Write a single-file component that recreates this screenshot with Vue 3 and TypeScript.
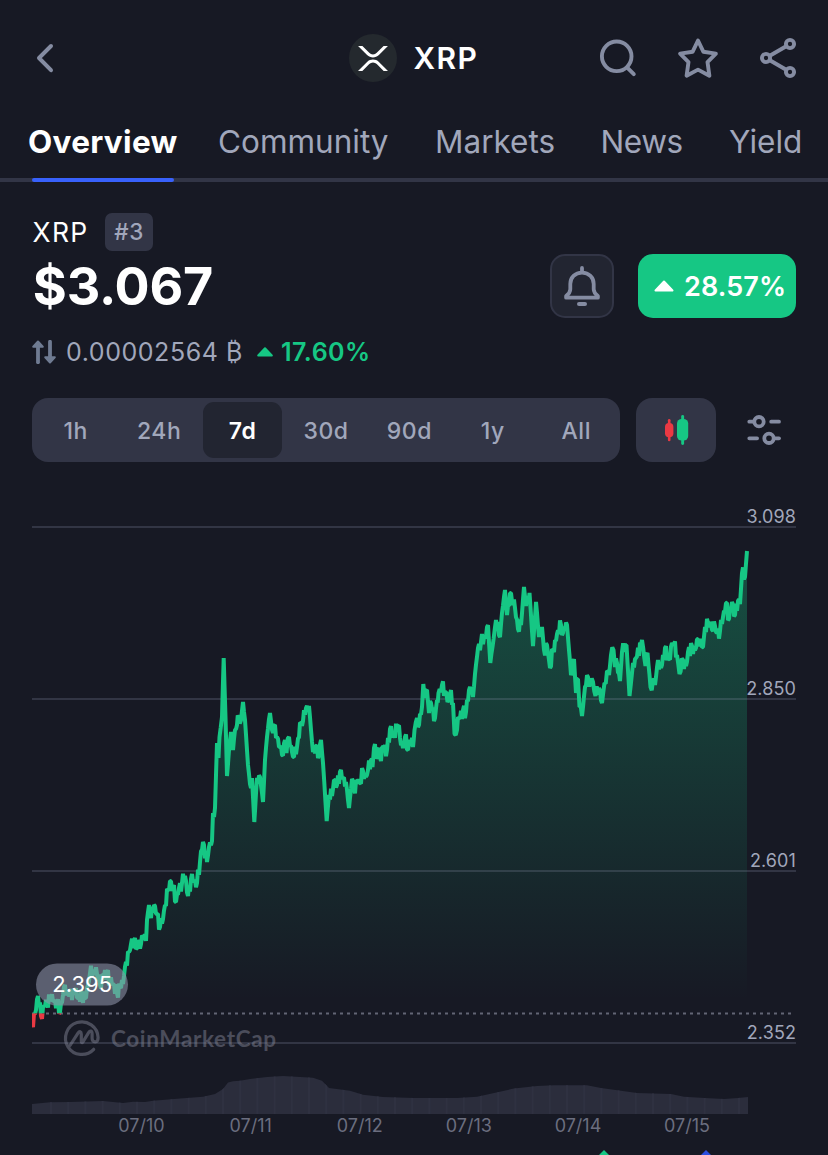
<script setup lang="ts">
type Point = [number, number]

const tabs = ['Overview', 'Community', 'Markets', 'News', 'Yield']
const ranges = ['1h', '24h', '7d', '30d', '90d', '1y', 'All']
const activeRange = '7d'

const gridRows = [
  { y: 527, label: '3.098' },
  { y: 699, label: '2.850' },
  { y: 871, label: '2.601' },
  { y: 1043, label: '2.352' },
]

const dates = [
  { x: 141.5, label: '07/10' },
  { x: 250.7, label: '07/11' },
  { x: 359.8, label: '07/12' },
  { x: 468.9, label: '07/13' },
  { x: 578, label: '07/14' },
  { x: 687.1, label: '07/15' },
]

const baseline = 1013.5

const prices: Point[] = [
  [32, 1023], [35, 1014], [38, 996], [41, 1016], [44, 1006], [47, 1003], [51, 998], [54, 1001], [57, 1003], [60, 1012],
  [63, 995], [65, 985], [67, 992], [70, 994], [75, 992], [78, 998], [82, 996], [85, 998], [88, 985], [90, 973],
  [93, 972], [97, 974], [100, 985], [103, 975], [107, 972], [110, 982], [113, 984], [117, 993], [120, 987], [124, 976],
  [126, 962], [129, 952], [131, 944], [134, 940], [136, 949], [139, 942], [141, 944], [143, 937], [146, 941], [147, 920],
  [149, 905], [151, 918], [154, 905], [157, 914], [160, 927], [163, 919], [165, 905], [168, 890], [170, 881], [173, 887],
  [176, 902], [179, 888], [182, 883], [185, 876], [188, 896], [191, 879], [194, 881], [197, 883], [200, 862], [203, 842],
  [207, 862], [209, 847], [212, 841], [213, 813], [215, 808], [217, 743], [218.5, 758], [219.5, 737], [222, 717], [223.7, 658],
  [225.5, 717], [227, 776], [229, 750], [231, 732], [233, 750], [235, 730], [237, 725], [238.5, 717], [241, 720], [243, 702],
  [245, 720], [248, 765], [250, 784], [252, 778], [254.3, 822], [257, 778], [260, 777], [263, 802], [265, 760], [267, 737],
  [269, 719], [271, 721], [273, 733], [275, 725], [277, 737], [280, 747], [282, 755], [285, 740], [286.5, 753], [289, 737],
  [292, 752], [294, 757], [297, 747], [301, 723], [303, 721], [306, 708], [309, 706], [311, 730], [313, 752], [316, 746],
  [318, 758], [321, 740], [323, 763], [326.7, 821], [329, 795], [332, 796], [334, 780], [337, 785], [341, 770], [343, 778],
  [346, 782], [349, 808], [352, 779], [354, 789], [357, 781], [360, 783], [363, 771], [366, 777], [368, 770], [371, 760],
  [372.5, 767], [374, 748], [377, 757], [379, 748], [381, 761], [383, 747], [387, 750], [390, 729], [393, 737], [398, 726],
  [400, 738], [403, 748], [405, 737], [408, 750], [410, 740], [413, 747], [414.5, 730], [417, 718], [419, 725], [422, 707],
  [423.3, 684], [425, 698], [427, 690], [429, 713], [431, 703], [435, 718], [437, 700], [438.5, 693], [442, 685], [445, 692],
  [447.5, 702], [450, 694], [453, 703], [454.5, 734], [457, 730], [459, 718], [463, 710], [466, 712], [470, 687], [473, 697],
  [475, 674], [478, 648], [481, 642], [485, 638], [488, 625], [490.3, 663], [492.5, 647], [496, 620], [500, 637], [502, 613],
  [505, 590], [507, 615], [511, 593], [513, 605], [515, 608], [518, 629], [521, 625], [524, 587], [526, 606], [529.5, 593],
  [533, 646], [536, 602], [539, 637], [542, 627], [544, 650], [547, 645], [550, 668], [553, 650], [557, 634], [561, 625],
  [563, 633], [567, 625], [569, 650], [571, 675], [574, 659], [576, 693], [578, 679], [579.5, 707], [582, 716], [585, 687],
  [588, 677], [590.5, 683], [593, 682], [595.5, 696], [599, 688], [602, 703], [604.5, 683], [607, 671], [609, 675], [611, 655],
  [613.5, 650], [615, 667], [617, 663], [620, 681], [622, 652], [626.5, 645], [629.5, 696], [632, 673], [636, 658], [642, 640],
  [645.5, 666], [647.5, 653], [650.5, 687], [653, 680], [655, 685], [658, 660], [661, 668], [665, 648], [669, 659], [672, 643],
  [674, 644], [677, 655], [679.5, 674], [683, 660], [686, 666], [688, 652], [692, 646], [695, 650], [698, 639], [700, 643],
  [703, 647], [705, 627], [708, 623], [711, 624], [713, 631], [715, 626], [717, 633], [720, 631], [723, 617], [726, 603],
  [729, 619], [732, 602], [735, 615], [738, 601], [740, 604], [742, 573], [745, 577], [747, 551],
]

const volume: Point[] = [
  [32, 1104], [50, 1102.3], [70, 1102], [103, 1101], [123, 1103], [133, 1101.7], [145, 1102], [153, 1100.7], [177, 1098.7],
  [203, 1096.7], [215, 1094], [223, 1089], [228, 1082.5], [233, 1081.3], [240, 1080.8], [250, 1079], [267, 1077], [283, 1076],
  [313, 1077.7], [322, 1080.7], [329, 1088], [350, 1090.7], [363, 1094.7], [383, 1097], [414, 1098], [457, 1098],
  [477, 1096.7], [494, 1093], [514, 1088.5], [537, 1086], [554, 1085.3], [587, 1085.3], [601, 1088], [621, 1090.7],
  [637, 1093], [671, 1094], [684, 1096.7], [705, 1098], [724, 1099], [738, 1098], [748, 1097],
]

const toPoints = (list: Point[]): string => list.map(([x, y]) => `${x.toFixed(2)},${y.toFixed(2)}`).join(' ')

// Fills the gaps between key prices with small tick-to-tick swings.
function withTicks(list: Point[]): Point[] {
  const out: Point[] = []
  let side = 1
  for (let i = 0; i < list.length - 1; i++) {
    const [x0, y0] = list[i]
    const [x1, y1] = list[i + 1]
    out.push(list[i])
    const steps = Math.max(2, Math.round((x1 - x0) / 1.07))
    const steepness = Math.abs(y1 - y0) / (x1 - x0)
    const swing = steepness > 7 ? 1 : 7
    for (let k = 1; k < steps; k++) {
      const t = k / steps
      const wobble = 0.6 + 0.4 * Math.sin(i * 2.3 + k * 1.7)
      out.push([x0 + (x1 - x0) * t, y0 + (y1 - y0) * t + side * swing * wobble])
      side = -side
    }
  }
  out.push(list[list.length - 1])
  return out
}

const linePoints = toPoints(withTicks(prices))
const areaPoints = `32,${baseline} ${linePoints} 747,${baseline}`
const volumePoints = `32,1114 ${toPoints(volume)} 748,1114`
const stripes = Array.from({ length: 41 }, (_, i) => 51 + i * 17.2)
</script>

<template>
  <div class="screen">
    <header class="topbar">
      <svg class="back" viewBox="0 0 24 32" fill="none">
        <path d="M19 4 7 16l12 12.2" stroke="#858ca2" stroke-width="4" stroke-linecap="round" stroke-linejoin="round" />
      </svg>
      <div class="coin">
        <span class="coin-badge">
          <svg viewBox="0 0 512 424" fill="#fff">
            <path d="M437 0h74L357 152.48c-55.77 55.19-146.19 55.19-202 0L.94 0H75l117 115.83a91.11 91.11 0 0 0 127.91 0Z" />
            <path d="M74.05 424H0l155-153.42c55.77-55.19 146.19-55.19 202 0L512 424h-74L320 307.23a91.11 91.11 0 0 0-127.91 0Z" />
          </svg>
        </span>
        <span class="coin-name">XRP</span>
      </div>
      <div class="actions">
        <svg viewBox="0 0 44 44" fill="none">
          <circle cx="20.7" cy="20.3" r="14.8" />
          <path d="m31.5 31.8 6.3 6.4" />
        </svg>
        <svg viewBox="0 0 44 44" fill="none">
          <path d="m22 4.5 5.3 11.2 12.6 1.9-8.4 8.5 1.9 13.6L22 33.6l-11.4 6.1 1.9-13.6-8.4-8.5 12.6-1.9z" />
        </svg>
        <svg viewBox="0 0 44 44" fill="none">
          <circle cx="34" cy="8" r="4.1" />
          <circle cx="10" cy="22" r="4.1" />
          <circle cx="34" cy="36" r="4.1" />
          <path d="m13.8 19.8 16.4-9.6M13.8 24.2l16.4 9.6" />
        </svg>
      </div>
    </header>

    <nav class="tabs">
      <span v-for="(tab, i) in tabs" :key="tab" class="tab" :class="{ active: i === 0 }">{{ tab }}</span>
    </nav>

    <section class="summary">
      <div class="quote">
        <div class="name-row">
          <span class="symbol">XRP</span>
          <span class="rank">#3</span>
        </div>
        <div class="price">$3.067</div>
      </div>
      <button class="bell" type="button">
        <svg viewBox="0 0 44 44" fill="none" stroke="#858ca2" stroke-linecap="round" stroke-linejoin="round">
          <path d="M22 4v4" stroke-width="3.8" />
          <path d="M22 8.6c-7 0-11.7 5-11.7 11.4v5.2c0 3.2-1.4 4.6-4.2 6.8v1.7h31.8V32c-2.8-2.2-4.2-3.6-4.2-6.8V20C33.7 13.6 29 8.6 22 8.6z" stroke-width="3.8" />
          <path d="M19 40h6" stroke-width="4" />
        </svg>
      </button>
      <div class="change">
        <svg viewBox="0 0 20 12"><path d="M10 1.5 18.5 10.5h-17z" fill="#fff" stroke="#fff" stroke-width="2" stroke-linejoin="round" /></svg>
        <span>28.57%</span>
      </div>
    </section>

    <div class="btc-row">
      <svg class="swap" viewBox="0 0 24 24" fill="#6f7b92" stroke="#6f7b92" stroke-linecap="round" stroke-linejoin="round">
        <path d="M6 22.3V5" stroke-width="3.8" />
        <path d="M6 1.5 10.8 6.7H1.2z" stroke-width="2" />
        <path d="M18 1.7V19" stroke-width="3.8" />
        <path d="m18 22.5 4.8-5.2h-9.6z" stroke-width="2" />
      </svg>
      <span class="btc-value">0.00002564 ₿</span>
      <svg class="up" viewBox="0 0 16 10"><path d="M8 1.3 14.8 8.5H1.2z" fill="#16c784" stroke="#16c784" stroke-width="2" stroke-linejoin="round" /></svg>
      <span class="btc-change">17.60%</span>
    </div>

    <div class="controls">
      <div class="ranges">
        <span v-for="r in ranges" :key="r" class="range" :class="{ active: r === activeRange }">{{ r }}</span>
      </div>
      <button class="candles" type="button">
        <svg viewBox="0 0 28 32">
          <g fill="#ea3943">
            <rect x="3.9" y="5" width="2.6" height="22.3" rx="1.3" />
            <rect x="1" y="9" width="8.4" height="14.2" rx="4" />
          </g>
          <g fill="#16c784">
            <rect x="17.2" y="1" width="2.9" height="30" rx="1.4" />
            <rect x="13" y="5" width="11.2" height="21.6" rx="4.6" />
          </g>
        </svg>
      </button>
      <svg class="sliders" viewBox="0 0 36 32" fill="none" stroke="#858ca2" stroke-width="3.8" stroke-linecap="round">
        <path d="M3.3 7.7h3.600" />
        <circle cx="13" cy="7.7" r="4.7" />
        <path d="M25.2 7.700h7.800M3.300 24.300h7.800" />
        <circle cx="23" cy="24.3" r="4.7" />
        <path d="M29.700 24.300H33" />
      </svg>
    </div>

    <svg class="chart" viewBox="0 480 828 675">
      <defs>
        <linearGradient id="fade" gradientUnits="userSpaceOnUse" x1="0" y1="551" x2="0" y2="1000">
          <stop offset="0" stop-color="#16c784" stop-opacity="0.32" />
          <stop offset="1" stop-color="#16c784" stop-opacity="0" />
        </linearGradient>
        <clipPath id="above"><rect x="32" y="480" width="730" height="533.5" /></clipPath>
        <clipPath id="below"><rect x="32" y="1013.5" width="730" height="20" /></clipPath>
        <clipPath id="volume"><polygon :points="volumePoints" /></clipPath>
      </defs>

      <g class="watermark">
        <path d="M93.7 1049.3A16.3 16.3 0 1 1 98.1 1037.5c0 3-1 4.3-3 4.3s-3-1.2-3-3.5v-4.5c0-3.2-2-3.6-3.5-1.2l-5.6 9.2c-.9 1.3-1.7 1-1.7-.6v-7c0-2.8-1.8-3.4-3.3-1l-8 12.3" fill="none" stroke="#4b4d5b" stroke-width="3.2" stroke-linecap="round" stroke-linejoin="round" />
        <text x="111" y="1046.5" textLength="165">CoinMarketCap</text>
      </g>

      <polygon :points="areaPoints" fill="url(#fade)" clip-path="url(#above)" />
      <g class="grid">
        <line v-for="row in gridRows" :key="row.label" x1="32" x2="796" :y1="row.y" :y2="row.y" />
      </g>
      <line class="dotted" x1="32" x2="791.5" :y1="baseline" :y2="baseline" />

      <polygon :points="volumePoints" fill="#2b2d3c" />
      <g clip-path="url(#volume)">
        <line v-for="x in stripes" :key="x" :x1="x" :x2="x" y1="1070" y2="1114" class="stripe" />
      </g>

      <polyline class="line" :points="linePoints" clip-path="url(#above)" />
      <polyline class="line down" :points="linePoints" clip-path="url(#below)" />

      <text v-for="row in gridRows" :key="row.label" class="value" x="796" :y="row.y - 4" text-anchor="end">{{ row.label }}</text>
      <text v-for="d in dates" :key="d.label" class="date" :x="d.x" y="1132" text-anchor="middle">{{ d.label }}</text>

      <rect x="36" y="963.5" width="92" height="42" rx="21" fill="#8e92a7" fill-opacity="0.58" />
      <text class="open" x="82.2" y="992" text-anchor="middle">2.395</text>

      <path d="m604 1150 7 7h-14z" fill="#16c784" />
      <path d="m706 1150 7 7h-14z" fill="#2b4fe0" />
    </svg>
  </div>
</template>

<style>
body {
  background: #171924;
}
</style>

<style scoped>
.screen {
  width: 828px;
  height: 1155px;
  overflow: hidden;
  background: #171924;
  color: #fff;
  font-family: Inter, "Liberation Sans", sans-serif;
}

.screen svg {
  display: block;
  flex: none;
}

button {
  padding: 0;
  border: 0;
  font: inherit;
}

.topbar {
  display: grid;
  grid-template-columns: 1fr auto 1fr;
  align-items: center;
  height: 116px;
  padding: 0 28px 0 32px;
}

.back {
  width: 24px;
  height: 32px;
}

.coin {
  display: flex;
  align-items: center;
  gap: 16px;
}

.coin-badge {
  display: flex;
  align-items: center;
  justify-content: center;
  width: 48px;
  height: 48px;
  border-radius: 50%;
  background: #24292e;
}

.coin-badge svg {
  width: 30px;
  height: 25px;
}

.coin-name {
  width: 70px;
  font-size: 30px;
  font-weight: 600;
  letter-spacing: 1.4px;
  text-indent: 0.5px;
}

.actions {
  display: flex;
  justify-content: flex-end;
  gap: 36px;
}

.actions svg {
  width: 44px;
  height: 44px;
  stroke: #858ca2;
  stroke-width: 3.9;
  stroke-linecap: round;
  stroke-linejoin: round;
}

.tabs {
  display: grid;
  grid-template-columns: 190px 217px 165.5px 128.5px auto;
  box-sizing: border-box;
  height: 66px;
  padding-left: 28px;
  border-bottom: 4px solid #323546;
  color: #a1a7bb;
  font-size: 31.5px;
  line-height: 52px;
  white-space: nowrap;
}

.tab:nth-child(4) {
  letter-spacing: -0.4px;
}

.tab.active {
  position: relative;
  color: #fff;
  font-weight: 700;
  letter-spacing: 0.3px;
}

.tab.active::after {
  content: "";
  position: absolute;
  left: 4px;
  bottom: -4px;
  width: 142px;
  height: 4px;
  border-radius: 2px;
  background: #3861fb;
}

.summary {
  display: flex;
  align-items: flex-end;
  height: 136px;
  padding: 0 32px;
}

.quote {
  flex: 1;
}

.name-row {
  display: flex;
  align-items: center;
  gap: 17px;
  height: 38px;
}

.symbol {
  width: 56px;
  font-size: 26.5px;
  letter-spacing: 1.3px;
  text-indent: 0.5px;
}

.rank {
  width: 48px;
  border-radius: 7px;
  background: #323546;
  color: #a1a7bb;
  font-size: 22.5px;
  font-weight: 500;
  letter-spacing: 0.4px;
  line-height: 38px;
  text-align: center;
}

.price {
  height: 67px;
  font-size: 52px;
  font-weight: 700;
  letter-spacing: -0.2px;
  line-height: 71px;
  text-indent: 0.8px;
}

.bell,
.change {
  box-sizing: border-box;
  height: 64px;
  border-radius: 15px;
}

.bell {
  display: flex;
  align-items: center;
  justify-content: center;
  width: 64px;
  border: 2px solid #323546;
  background: #222531;
}

.bell svg {
  width: 44px;
  height: 44px;
}

.change {
  display: flex;
  align-items: center;
  gap: 10px;
  width: 158px;
  margin-left: 24px;
  padding-left: 16px;
  background: #16c784;
  font-size: 27px;
  font-weight: 600;
  letter-spacing: 0.1px;
  white-space: nowrap;
}

.change svg {
  width: 20px;
  height: 12px;
}

.btc-row {
  display: flex;
  align-items: center;
  height: 68px;
  padding: 0 32px;
  font-size: 25px;
  white-space: nowrap;
}

.swap {
  width: 24px;
  height: 24px;
  margin-right: 10px;
}

.btc-value {
  width: 176px;
  color: #a1a7bb;
  letter-spacing: 0.55px;
}

.up {
  width: 16px;
  height: 10px;
  margin: 0 8px 0 15px;
}

.btc-change {
  color: #16c784;
  font-weight: 600;
  letter-spacing: 0.5px;
}

.controls {
  display: flex;
  align-items: center;
  height: 64px;
  margin-top: 12px;
  padding: 0 32px;
}

.ranges {
  display: flex;
  box-sizing: border-box;
  width: 588px;
  height: 64px;
  padding: 4px 2px 4px 2px;
  border-radius: 16px;
  background: #323546;
}

.range {
  flex: 1;
  margin: 0 2px;
  border-radius: 11px;
  color: #a1a7bb;
  font-size: 23px;
  font-weight: 500;
  letter-spacing: 0.5px;
  line-height: 58px;
  text-align: center;
}

.range.active {
  background: #222531;
  color: #fff;
  font-weight: 600;
}

.candles {
  display: flex;
  align-items: center;
  justify-content: center;
  width: 80px;
  height: 64px;
  margin: 0 30px 0 16px;
  border-radius: 16px;
  background: #323546;
}

.candles svg {
  width: 28px;
  height: 32px;
  margin-left: 4px;
}

.sliders {
  width: 36px;
  height: 32px;
}

.chart {
  width: 828px;
  height: 675px;
  margin-top: 18px;
}

.watermark text {
  fill: #4b4d5b;
  font-family: Lato, sans-serif;
  font-size: 22.5px;
  font-weight: 700;
}

.grid line {
  stroke: #858ca2;
  stroke-width: 2;
  stroke-opacity: 0.25;
}

.dotted {
  stroke: #626574;
  stroke-width: 2;
  stroke-dasharray: 3 4;
}

.stripe {
  stroke: #2f3141;
  stroke-width: 2;
}

.line {
  fill: none;
  stroke: #16c784;
  stroke-width: 4;
  stroke-linejoin: bevel;
}

.line.down {
  stroke: #ea3943;
}

.value {
  fill: #a1a7bb;
  font-size: 18px;
  letter-spacing: 0.1px;
}

.date {
  fill: #6b6e7f;
  font-size: 18px;
}

.open {
  fill: #fff;
  font-size: 22px;
}
</style>
